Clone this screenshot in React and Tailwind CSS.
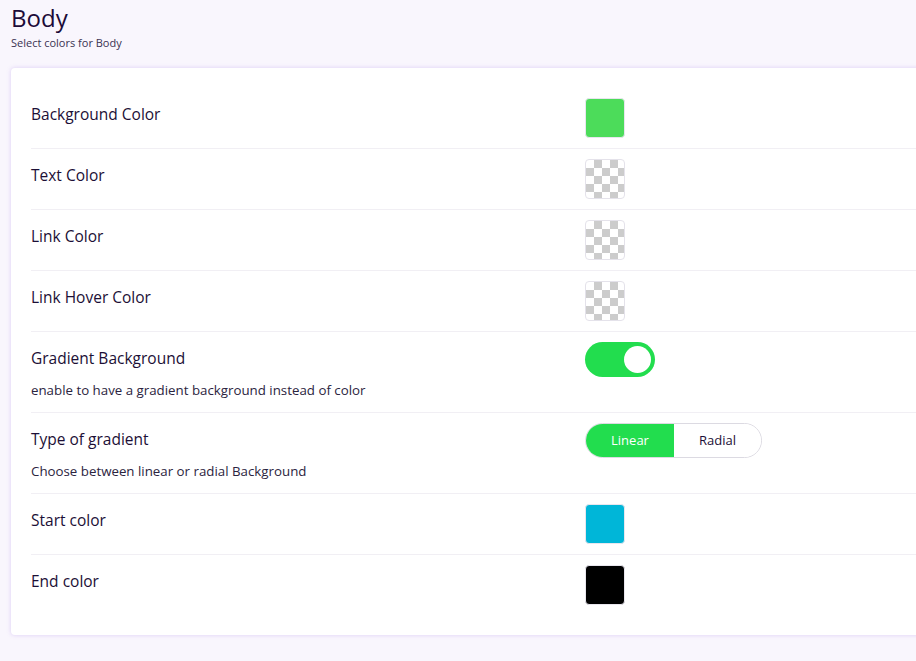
import React from "react";

const checker =
  "bg-[conic-gradient(#cccccc_25%,#ffffff_0_50%,#cccccc_0_75%,#ffffff_0)] bg-[length:16px_16px]";

const Swatch = ({ color }) => {
  if (!color) {
    return (
      <div
        className={`w-10 h-10 rounded-[4px] border border-[#e4e2ea] ${checker}`}
      />
    );
  }
  return (
    <div
      className="w-10 h-10 rounded-[4px] border border-[#e8e6ee]"
      style={{ backgroundColor: color }}
    />
  );
};

const Row = ({ label, desc, children, last }) => (
  <div
    className={`flex py-[10px] ${last ? "" : "border-b border-[#f1eff4]"}`}
  >
    <div className="w-[554px] shrink-0">
      <div className="text-[15.5px] leading-[20px] text-[#1c0f36] pt-[6px]">
        {label}
      </div>
      {desc && (
        <div className="text-[13.3px] leading-[18px] text-[#2b2440] mt-[13px] mb-[3px]">
          {desc}
        </div>
      )}
    </div>
    <div>{children}</div>
  </div>
);

const Toggle = () => (
  <div className="w-[70px] h-[35px] rounded-full bg-[#22dd4e] flex items-center justify-end px-[4px]">
    <div className="w-[27px] h-[27px] rounded-full bg-white" />
  </div>
);

const Segmented = () => (
  <div className="flex h-[35px] w-[177px] rounded-full border border-[#dcdae2] overflow-hidden text-[13px]">
    <div className="w-[88px] bg-[#22dd4e] text-white flex items-center justify-center">
      Linear
    </div>
    <div className="flex-1 bg-white text-[#1c0f36] flex items-center justify-center">
      Radial
    </div>
  </div>
);

export default function App() {
  return (
    <div className="w-screen h-[661px] overflow-hidden bg-[#f9f6fd] font-['Open_Sans',sans-serif]">
      <div className="px-[11px] pt-[3px]">
        <h1 className="text-[24px] leading-[30px] text-[#1c0b38]">Body</h1>
        <p className="text-[11px] leading-[14px] text-[#3a3252] mt-[3px]">
          Select colors for Body
        </p>
        <div className="mt-[18px] w-[1150px] bg-white rounded-[4px] shadow-[0_0_4px_rgba(170,130,230,0.35)] px-[20px] py-[20px]">
          <Row label="Background Color">
            <Swatch color="#4cdc5a" />
          </Row>
          <Row label="Text Color">
            <Swatch />
          </Row>
          <Row label="Link Color">
            <Swatch />
          </Row>
          <Row label="Link Hover Color">
            <Swatch />
          </Row>
          <Row
            label="Gradient Background"
            desc="enable to have a gradient background instead of color"
          >
            <Toggle />
          </Row>
          <Row
            label="Type of gradient"
            desc="Choose between linear or radial Background"
          >
            <Segmented />
          </Row>
          <Row label="Start color">
            <Swatch color="#00b6d8" />
          </Row>
          <Row label="End color" last>
            <Swatch color="#000000" />
          </Row>
        </div>
      </div>
    </div>
  );
}
